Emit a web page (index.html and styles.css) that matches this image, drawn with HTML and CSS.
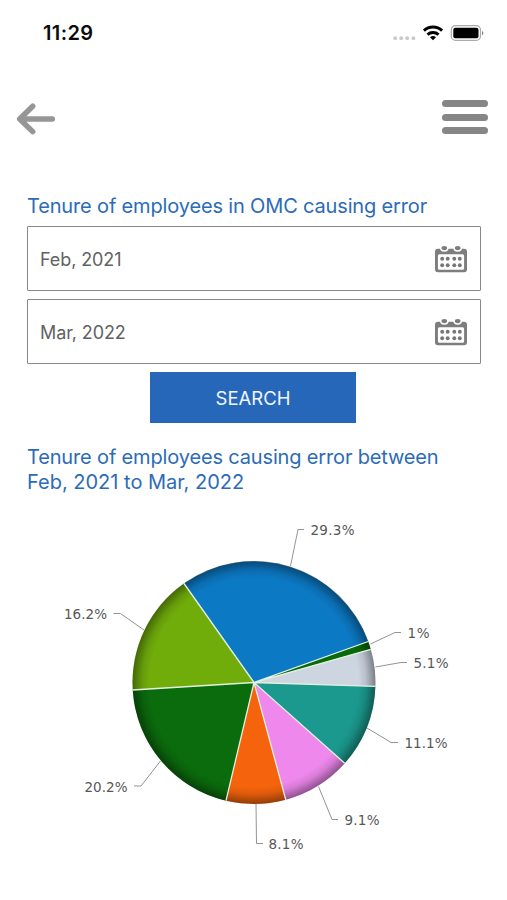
FILE: index.html
```html
<!DOCTYPE html>
<html lang="en">
<head>
<meta charset="utf-8">
<meta name="viewport" content="width=device-width">
<title>Tenure of employees</title>
<link rel="stylesheet" href="styles.css">
</head>
<body>
<header class="status">
  <span class="time">11:29</span>
  <svg class="indicators" width="92" height="20" viewBox="0 0 92 20" aria-hidden="true">
    <g fill="#c9c9c9"><circle cx="3.200" cy="15.200" r="1.900"/><circle cx="9.200" cy="15.200" r="1.900"/><circle cx="15.200" cy="15.200" r="1.900"/><circle cx="21.400" cy="15.200" r="1.900"/></g>
    <g fill="none" stroke="#000" stroke-width="2.900"><path d="M31.900 7.600a13.400 13.400 0 0 1 18.200 0"/><path d="M35.500 11.600a8.200 8.200 0 0 1 11 0"/></g>
    <path d="M38 14.200a4.600 4.600 0 0 1 6 0L41 17.200z"/>
    <rect x="59.300" y="2.600" width="29.200" height="14.800" rx="4.200" fill="none" stroke="#aaa" stroke-width="1.200"/>
    <rect x="61.300" y="4.700" width="25.200" height="10.600" rx="2"/>
    <path d="M90 7.900q1.400.5 1.400 2.200t-1.400 2.200z" fill="#888"/>
  </svg>
</header>
<nav class="nav">
  <svg width="40" height="34" viewBox="0 0 40 34" fill="none" stroke="#969696" stroke-width="5.500" stroke-linecap="round" stroke-linejoin="round"><path d="M36.300 17H4M16.700 4.200L3.700 17l13 12.600"/></svg>
  <div class="menu"><i></i><i></i><i></i></div>
</nav>
<main>
  <h1 class="heading first">Tenure of employees in OMC causing error</h1>
  <div class="field"><span>Feb, 2021</span>
    <svg width="34" height="28" viewBox="0 0 34 28"><use href="#calendar"/></svg></div>
  <div class="field"><span>Mar, 2022</span>
    <svg width="34" height="28" viewBox="0 0 34 28">
      <g id="calendar">
        <path d="M4 3.700h26q3 0 3 3v17.600q0 3-3 3H4q-3 0-3-3V6.700q0-3 3-3zM5.500 9.300q-1.600 0-1.600 1.600v12.300q0 1.500 1.600 1.500h23q1.600 0 1.600-1.500V10.900q0-1.600-1.600-1.600z" fill="#7d7d7d" fill-rule="evenodd"/>
        <g fill="#7d7d7d" stroke="#fff" stroke-width="1.500"><ellipse cx="10.300" cy="3.100" rx="3.600" ry="2.900"/><ellipse cx="23.700" cy="3.100" rx="3.600" ry="2.900"/></g>
        <g fill="#777"><circle cx="8.200" cy="13.700" r="1.950"/><circle cx="13.700" cy="13.700" r="1.950"/><circle cx="20.300" cy="13.700" r="1.950"/><circle cx="25.800" cy="13.700" r="1.950"/><circle cx="8.200" cy="20.300" r="1.950"/><circle cx="13.700" cy="20.300" r="1.950"/><circle cx="20.300" cy="20.300" r="1.950"/><circle cx="25.800" cy="20.300" r="1.950"/></g>
      </g>
    </svg></div>
  <button class="search">SEARCH</button>
  <h2 class="heading">Tenure of employees causing error between<br><span class="range">Feb, 2021 to Mar, 2022</span></h2>
</main>
<svg class="chart" width="507" height="370" viewBox="0 500 507 370">
  <defs>
    <radialGradient id="shade" gradientUnits="userSpaceOnUse" cx="254" cy="682.500" r="121.500">
      <stop offset=".86" stop-color="#000" stop-opacity="0"/>
      <stop offset=".92" stop-color="#000" stop-opacity=".1"/>
      <stop offset="1" stop-color="#000" stop-opacity=".4"/>
    </radialGradient>
  </defs>
  <g>
    <path fill="#0c79c5" d="M254 682.500L184 583.500A121.500 121.500 0 0 1 368.200 641.500Z"/>
    <path fill="#086b0b" d="M254 682.500L368.200 641.500A121.500 121.500 0 0 1 370.700 649.300Z"/>
    <path fill="#cdd5e1" d="M254 682.500L370.700 649.300A121.500 121.500 0 0 1 375.400 686.400Z"/>
    <path fill="#1b998e" d="M254 682.500L375.400 686.400A121.500 121.500 0 0 1 344.700 763.300Z"/>
    <path fill="#ee88ed" d="M254 682.500L344.700 763.300A121.500 121.500 0 0 1 285.800 799.800Z"/>
    <path fill="#f5640c" d="M254 682.500L285.800 799.800A121.500 121.500 0 0 1 226 800.700Z"/>
    <path fill="#0b6c0d" d="M254 682.500L226 800.700A121.500 121.500 0 0 1 132.700 690Z"/>
    <path fill="#70ad0b" d="M254 682.500L132.700 690A121.500 121.500 0 0 1 184 583.500Z"/>
  </g>
  <circle cx="254" cy="682.500" r="121.500" fill="url(#shade)"/>
  <path class="dividers" d="M254 682.500L184 583.500M254 682.500L368.200 641.500M254 682.500L370.700 649.300M254 682.500L375.400 686.400M254 682.500L344.700 763.300M254 682.500L285.800 799.800M254 682.500L226 800.700M254 682.500L132.700 690"/>
  <g class="leaders">
    <path d="M290.500 566L298 529.500H304M370.500 644L395 632.500H401M375.500 667L401 662.500H407M367 728L391 742.500H398M318.500 786.500L332 819.500H338M256 804L256.500 843.500H263M160.500 761L141 786H134M144 630L120.500 613.500H113.500"/>
  </g>
  <g class="labels">
    <text x="310.500" y="535" textLength="44">29.3%</text>
    <text x="407.500" y="638" textLength="22">1%</text>
    <text x="413.500" y="668" textLength="35">5.1%</text>
    <text x="404.500" y="748" textLength="43">11.1%</text>
    <text x="344.500" y="825" textLength="35">9.1%</text>
    <text x="268.500" y="849" textLength="35">8.1%</text>
    <text x="84.500" y="791.500" textLength="43">20.2%</text>
    <text x="64" y="619" textLength="43">16.2%</text>
  </g>
</svg>
</body>
</html>
```

FILE: styles.css
```css
* { box-sizing: border-box; }
body {
  margin: 0;
  width: 507px;
  height: 900px;
  overflow: hidden;
  background: #fff;
  font-family: Inter, sans-serif;
}
.status {
  height: 66px;
  padding: 0 23px 0 43px;
  display: flex;
  align-items: center;
  justify-content: space-between;
}
.time { font-size: 20px; font-weight: 600; letter-spacing: .4px; color: #0c0c0c; }
.indicators { display: block; }
.nav {
  height: 128px;
  padding: 34px 19px 0 16px;
  display: flex;
  align-items: flex-start;
  justify-content: space-between;
}
.nav svg { margin-top: 2px; }
.menu { width: 46px; display: grid; gap: 6.500px; }
.menu i { height: 7px; border-radius: 4px; background: #868686; }
main { padding: 0 26px 0 27px; }
.heading {
  margin: 0;
  font-size: 20px;
  font-weight: 400;
  line-height: 24.500px;
  letter-spacing: -.155px;
  color: #2c6bb8;
  white-space: nowrap;
}
.range { letter-spacing: 0; }
.heading.first { margin-bottom: 7.500px; }
.field {
  height: 65px;
  margin-bottom: 8px;
  padding: 1px 12px 0;
  display: flex;
  align-items: center;
  justify-content: space-between;
  border: 1px solid #888;
  border-radius: 1px;
  color: #626262;
  font-size: 18px;
  letter-spacing: -.1px;
}
.search {
  display: block;
  width: 206px;
  height: 51px;
  margin: 0 0 22px 123px;
  padding: 1px 0 0;
  border: 0;
  background: #2767ba;
  color: #f1f6ff;
  font: 400 18.500px Inter, sans-serif;
}
.chart { display: block; margin-top: 6px; }
.dividers { fill: none; stroke: #e3f0e0; stroke-width: 1.300px; }
.leaders { fill: none; stroke: #949494; stroke-width: 1px; }
.labels { font: 13.500px "DejaVu Sans", sans-serif; fill: #575757; }
```
